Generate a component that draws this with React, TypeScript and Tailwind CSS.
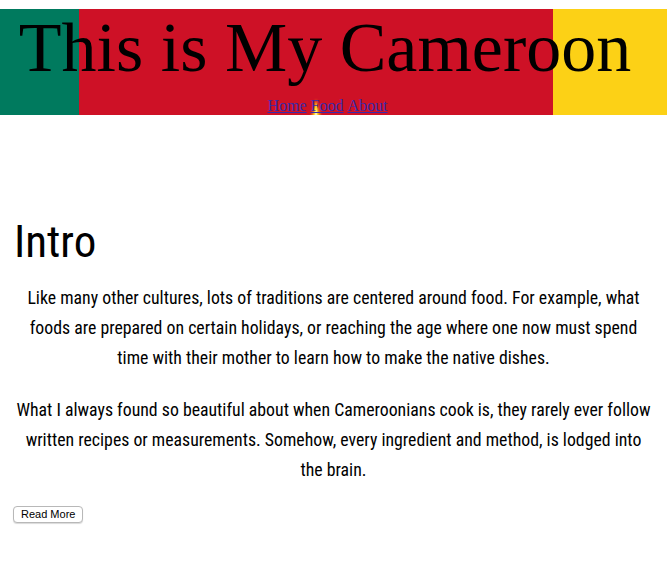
import React from "react";

export default function App() {
  return (
    <div className="min-h-[563px] bg-white">
      <div className="h-[9px]" />
      <header className="relative h-[106px] overflow-hidden flex flex-col items-center">
        <div className="absolute inset-0 flex">
          <div className="w-[79px] bg-[#007a5e]" />
          <div className="flex-1 bg-[#ce1126]" />
          <div className="w-[114px] bg-[#fcd116]" />
        </div>
        <svg className="absolute left-[298px] top-[76px]" width="36" height="44" viewBox="0 0 36 44">
          <defs>
            <filter id="b" x="-50%" y="-50%" width="200%" height="200%">
              <feGaussianBlur stdDeviation="1.3" />
            </filter>
            <filter id="b2" x="-50%" y="-50%" width="200%" height="200%">
              <feGaussianBlur stdDeviation="0.6" />
            </filter>
          </defs>
          <polygon points="18,14 26,42 10,42" fill="#f08a1c" filter="url(#b)" />
          <polygon points="18,17 23,42 13,42" fill="#fcd116" filter="url(#b2)" />
          <polygon points="18,22 20,34 16,34" fill="#fff0a0" filter="url(#b2)" />
        </svg>
        <h1 className="relative mt-[4px] text-[70px] leading-[70px] text-black font-['Liberation_Serif',serif] pr-[17px]">
          This is My Cameroon
        </h1>
        <nav className="relative mt-[14px] text-[16px] leading-[18px] font-['Liberation_Serif',serif] pr-[12px] flex gap-[4px]">
          <a href="#" className="text-[#3a2aa8] underline">Home</a>
          <a href="#" className="text-[#3a2aa8] underline">Food</a>
          <a href="#" className="text-[#3a2aa8] underline">About</a>
        </nav>
      </header>
      <main className="px-[14px] font-['Liberation_Sans_Narrow','Roboto_Condensed',sans-serif]">
        <h2 className="mt-[97px] text-[45px] leading-[60px] text-black">Intro</h2>
        <p className="mt-[11px] text-center text-[17.8px] leading-[30px] text-black">
          Like many other cultures, lots of traditions are centered around food. For example, what foods are prepared on certain holidays, or reaching the age where one now must spend time with their mother to learn how to make the native dishes.
        </p>
        <p className="mt-[22px] text-center text-[17.8px] leading-[30px] text-black">
          What I always found so beautiful about when Cameroonians cook is, they rarely ever follow written recipes or measurements. Somehow, every ingredient and method, is lodged into the&nbsp;brain.
        </p>
        <button className="mt-[21px] -ml-[1px] px-[7px] h-[17px] text-[11px] leading-[15px] font-['Liberation_Sans',sans-serif] text-black bg-white border border-[#b8b8b8] rounded-[4px] shadow-[0_1px_1px_rgba(0,0,0,0.15)]">
          Read More
        </button>
      </main>
    </div>
  );
}
